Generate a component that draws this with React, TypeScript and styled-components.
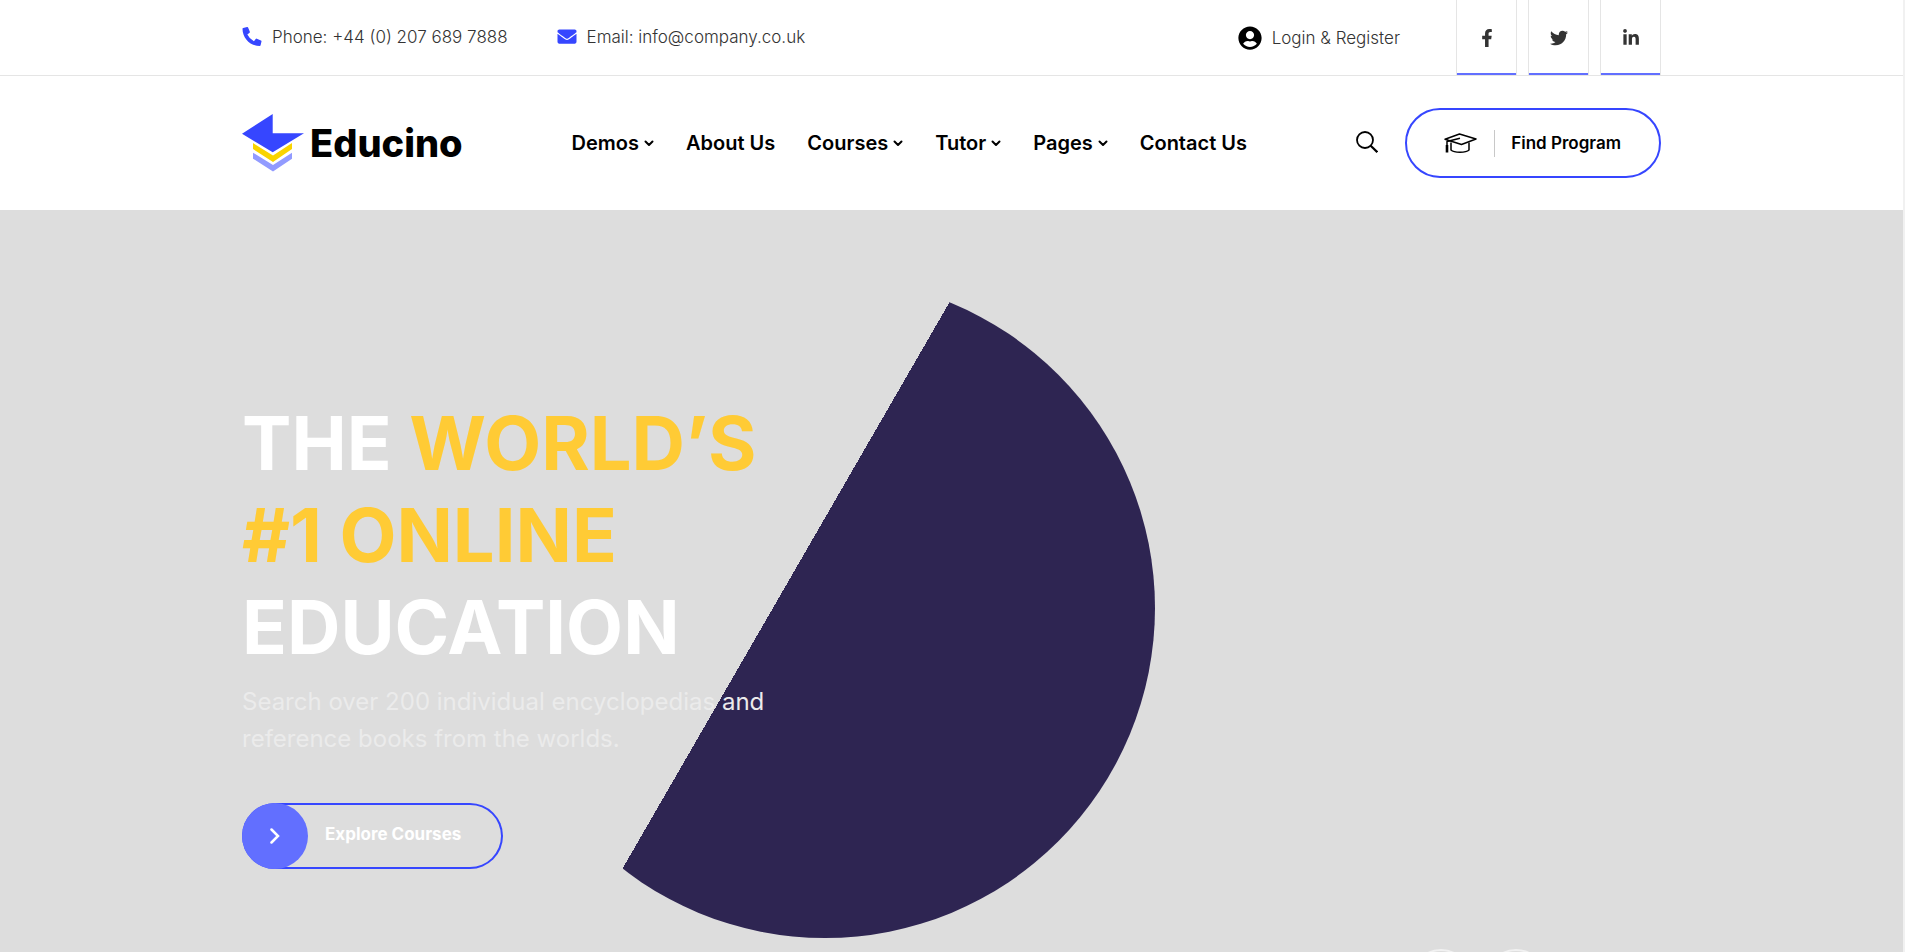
import React from "react";
import styled, { createGlobalStyle } from "styled-components";
import { FaPhoneAlt, FaEnvelope, FaUserCircle, FaFacebookF, FaTwitter, FaLinkedinIn } from "react-icons/fa";

const blue = "#3646ff";
const lightBlue = "#626fff";
const yellow = "#ffcb35";
const plum = "#2e2552";

const GlobalStyle = createGlobalStyle`
  * { box-sizing: border-box; }
  body {
    margin: 0;
    font-family: Inter, "Liberation Sans", sans-serif;
    color: #000;
    background: #fff;
  }
  a { color: inherit; text-decoration: none; }
  button { font-family: inherit; color: inherit; background: none; cursor: pointer; }
  ul { list-style: none; margin: 0; padding: 0; }
`;

const Page = styled.div`
  display: flex;
  flex-direction: column;
  min-height: 100vh;
  border-right: 2px solid #f1f1f1;
`;

const Container = styled.div`
  width: 100%;
  max-width: 1419px;
  margin: 0 auto;
`;

const TopBar = styled.div`
  border-bottom: 1px solid #e5e5e5;
`;

const TopBarRow = styled(Container)`
  display: flex;
  align-items: center;
  height: 75px;
`;

const TopLink = styled.a`
  display: flex;
  align-items: center;
  gap: 10px;
  font-size: 17px;
  font-weight: 300;
  color: #333;
`;

const ContactLink = styled(TopLink)`
  margin-right: 49px;
  padding-bottom: 2px;
  svg { width: 20px; height: 19px; color: ${blue}; }
`;

const LoginLink = styled(TopLink)`
  margin-left: auto;
  svg { width: 24px; height: 24px; color: #000; }
`;

const Socials = styled.div`
  display: flex;
  gap: 11px;
  height: 75px;
  margin-left: 56px;
`;

const SocialLink = styled.a`
  display: flex;
  align-items: center;
  justify-content: center;
  width: 61px;
  border: solid #e5e5e5;
  border-width: 0 1px;
  box-shadow: inset 0 -2px ${lightBlue};
  color: #333;
  svg { width: 18px; height: 18px; }
`;

const Header = styled.header`
  padding: 32px 0;
`;

const HeaderRow = styled(Container)`
  display: flex;
  align-items: center;
`;

const Logo = styled.a`
  display: flex;
  align-items: center;
  gap: 6px;
  font-size: 38px;
  line-height: 58px;
  font-weight: 800;
  svg { width: 62px; height: 58px; }
`;

const NavList = styled.ul`
  display: flex;
  gap: 32px;
  margin-left: 109px;
`;

const NavLink = styled.a`
  display: flex;
  align-items: center;
  gap: 5px;
  font-size: 20px;
  font-weight: 600;
  svg { width: 10px; height: 10px; }
`;

const SearchButton = styled.button`
  display: flex;
  margin-left: auto;
  padding: 0 0 2px;
  border: 0;
  svg { width: 22px; height: 22px; }
`;

const ProgramButton = styled.button`
  display: flex;
  align-items: center;
  height: 70px;
  margin-left: 27px;
  padding: 0 37px;
  border: 2px solid ${blue};
  border-radius: 35px;
  font-size: 17px;
  font-weight: 600;
  svg { width: 33px; height: 20px; }
`;

const ProgramLabel = styled.span`
  margin-left: 17px;
  padding: 0 1px 0 16px;
  border-left: 1px solid #c8c8c8;
  line-height: 27px;
`;

const Hero = styled.section`
  position: relative;
  flex: 1;
  overflow: hidden;
  background: #ddd;
`;

const HeroInner = styled(Container)`
  position: relative;
  padding: 187px 0 83px;
`;

const HalfDisc = styled.div`
  position: absolute;
  top: 68px;
  left: 253px;
  width: 660px;
  height: 660px;
  border-radius: 50%;
  background: linear-gradient(120deg, transparent 45%, ${plum} 45%);
`;

const HeroCopy = styled.div`
  position: relative;
  width: 560px;
`;

const Title = styled.h1`
  margin: 0;
  font-size: 74px;
  line-height: 92px;
  font-weight: 700;
  color: #fff;
  mark { background: none; color: ${yellow}; }
`;

const Lead = styled.p`
  margin: 10px 0 46px;
  font-size: 24px;
  line-height: 37px;
  color: #ebebeb;
`;

const ExploreButton = styled.a`
  display: flex;
  align-items: center;
  width: fit-content;
  height: 66px;
  padding-right: 42px;
  border-radius: 33px;
  box-shadow: inset 0 0 0 2px ${blue};
  font-size: 17px;
  font-weight: 700;
  color: #fff;
`;

const ExploreIcon = styled.span`
  display: grid;
  place-items: center;
  width: 66px;
  height: 66px;
  margin-right: 17px;
  border-radius: 50%;
  background: ${lightBlue};
`;

const ExploreLabel = styled.span`
  padding-bottom: 4px;
`;

const Arrows = styled.div`
  position: absolute;
  right: 115px;
  bottom: -57px;
  display: flex;
  gap: 15px;
`;

const ArrowButton = styled.button`
  width: 60px;
  height: 60px;
  border: 2px solid #f1f1f1;
  border-radius: 50%;
`;

const Chevron = () => (
  <svg viewBox="0 0 10 10" fill="none" stroke="currentColor" strokeWidth="2" strokeLinecap="round" strokeLinejoin="round">
    <path d="M1.5 3.5L5 7l3.5-3.5" />
  </svg>
);

const navItems = [
  { label: "Demos", menu: true },
  { label: "About Us", menu: false },
  { label: "Courses", menu: true },
  { label: "Tutor", menu: true },
  { label: "Pages", menu: true },
  { label: "Contact Us", menu: false },
];

const socials = [
  { name: "Facebook", Icon: FaFacebookF },
  { name: "Twitter", Icon: FaTwitter },
  { name: "LinkedIn", Icon: FaLinkedinIn },
];

export default function App() {
  return (
    <Page>
      <GlobalStyle />
      <TopBar>
        <TopBarRow>
          <ContactLink href="tel:+442076897888"><FaPhoneAlt />Phone: +44 (0) 207 689 7888</ContactLink>
          <ContactLink href="mailto:info@company.co.uk"><FaEnvelope />Email: info@company.co.uk</ContactLink>
          <LoginLink href="#login"><FaUserCircle />Login &amp; Register</LoginLink>
          <Socials>
            {socials.map(({ name, Icon }) => (
              <SocialLink key={name} href="#" aria-label={name}><Icon /></SocialLink>
            ))}
          </Socials>
        </TopBarRow>
      </TopBar>
      <Header>
        <HeaderRow>
          <Logo href="#">
            <svg viewBox="0 0 62 58">
              <path fill={blue} d="M0 19.7L30.7 0v19.3H62L30.7 38.2z" />
              <path fill="#f9d400" d="M11 29v6L31 48l19-13v-6L31 41.5z" />
              <path fill="#929bff" d="M11 38.7v6L31 57.5l19-12.8v-6L31 51z" />
            </svg>
            Educino
          </Logo>
          <nav>
            <NavList>
              {navItems.map(({ label, menu }) => (
                <li key={label}><NavLink href="#">{label}{menu && <Chevron />}</NavLink></li>
              ))}
            </NavList>
          </nav>
          <SearchButton aria-label="Search">
            <svg viewBox="0 0 22 22" fill="none" stroke="currentColor" strokeWidth="1.8">
              <circle cx="9" cy="9" r="8" />
              <path d="M14.7 14.7l6.6 6.4" strokeWidth="2.2" />
            </svg>
          </SearchButton>
          <ProgramButton>
            <svg viewBox="0 0 33 20" fill="none" stroke="currentColor" strokeWidth="1.5" strokeLinejoin="round">
              <path d="M1 6.2L15.5 1 32 6l-14.5 5.5z" />
              <path d="M7 9.5V17c3 3 15 3 18 0V9.500M16 5.200L3 8.500v5" />
              <path d="M3 12v7.500" strokeWidth="2.600" />
            </svg>
            <ProgramLabel>Find Program</ProgramLabel>
          </ProgramButton>
        </HeaderRow>
      </Header>
      <Hero>
        <HeroInner>
          <HalfDisc />
          <HeroCopy>
            <Title>THE <mark>WORLD’S<br />#1 ONLINE</mark><br />EDUCATION</Title>
            <Lead>Search over 200 individual encyclopedias and reference books from the worlds.</Lead>
            <ExploreButton href="#courses">
              <ExploreIcon>
                <svg width="10" height="16" viewBox="0 0 10 16" fill="none" stroke="currentColor" strokeWidth="2.5" strokeLinecap="round">
                  <path d="M1.5 1.5L8 8l-6.5 6.5" />
                </svg>
              </ExploreIcon>
              <ExploreLabel>Explore Courses</ExploreLabel>
            </ExploreButton>
          </HeroCopy>
          <Arrows>
            <ArrowButton aria-label="Previous slide" />
            <ArrowButton aria-label="Next slide" />
          </Arrows>
        </HeroInner>
      </Hero>
    </Page>
  );
}
